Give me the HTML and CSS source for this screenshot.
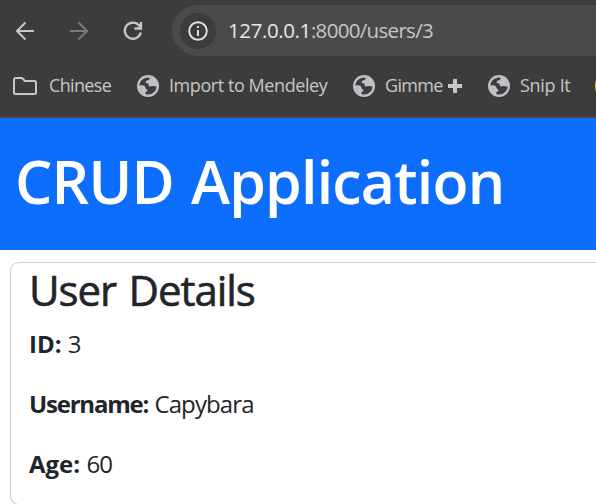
FILE: index.html
```html
<!DOCTYPE html>
<html lang="en">
<head>
<meta charset="utf-8">
<title>CRUD Application</title>
<link rel="stylesheet" href="styles.css">
</head>
<body>
<svg class="sprite" aria-hidden="true">
  <symbol id="globe" viewBox="0 0 64 64">
    <circle cx="32" cy="32" r="32" fill="#bdc1c6"/>
    <path d="M7 30C8 17 19 6 35 7c3 2 1 7-3 8-5 0-7 3-7 7 0 3 5 1 7 3 3 2 1 6 4 8 3 1 6-2 10-1 4 0 7 3 11 1 0 14-12 25-27 24-4-1-6-2-6-5 0-4 5-3 7-6 1-3-3-3-5-6-2-4-1-7-6-9-4-2-8 0-13-2z" fill="#3c3c3c"/>
  </symbol>
</svg>
<header class="browser">
  <div class="toolbar">
    <svg class="nav" viewBox="0 0 20 20"><path d="M19 10H2M10.500 1.500 2 10l8.500 8.500"/></svg>
    <svg class="nav forward" viewBox="0 0 20 20"><path d="M1 10h17M9.500 1.500 18 10l-8.500 8.500"/></svg>
    <svg class="nav reload" viewBox="0 0 20 20"><path d="M17.800 11.500a8.100 8.100 0 1 1-1.700-7.100l1.500 2.100M18 1v6.500h-6.500"/></svg>
    <div class="omnibox">
      <span class="site-info"><svg viewBox="0 0 20 20"><circle cx="10" cy="10" r="8.800"/><path d="M10 9v6M10 5v2"/></svg></span>
      <span class="url"><b>127.0.0.1</b>:8000/users/3</span>
    </div>
  </div>
  <nav class="bookmarks">
    <span class="bookmark folder"><svg viewBox="0 0 24 18"><path d="M1 2.500Q1 1 2.500 1H9l3 3h9.500Q23 4 23 5.500v10q0 1.500-1.500 1.500h-19Q1 17 1 15.500z"/></svg><span>Chinese</span></span>
    <span class="bookmark mendeley"><svg><use href="#globe"/></svg><span>Import to Mendeley</span></span>
    <span class="bookmark gimme"><svg><use href="#globe"/></svg><span>Gimme</span><i class="plus"></i></span>
    <span class="bookmark snip"><svg><use href="#globe"/></svg><span>Snip It</span></span>
    <i class="next"></i>
  </nav>
</header>
<div class="banner"><h1>CRUD Application</h1></div>
<main class="card">
  <h2>User Details</h2>
  <p><strong>ID:</strong> <span>3</span></p>
  <p><strong class="tight">Username:</strong> <span class="value">Capybara</span></p>
  <p><strong>Age:</strong> <span class="value">60</span></p>
</main>
</body>
</html>
```
FILE: styles.css
```css
* { box-sizing: border-box; }
body { margin: 0; height: 504px; overflow: hidden; background: #fff; color: #212529; font-family: "Open Sans", "Noto Sans", sans-serif; }
.sprite { display: none; }
.browser { height: 118px; background: #3c3c3c; border-bottom: 2px solid #474747; overflow: hidden; }
.toolbar { display: flex; align-items: center; height: 51px; margin-top: 5px; padding-left: 15px; }
.nav { width: 20px; height: 20px; flex: none; margin-right: 34px; fill: none; stroke: #c7c7c7; stroke-width: 2; }
.forward { stroke: #7b7b7b; }
.reload { margin-right: 29px; stroke-width: 2.300; }
.omnibox { display: flex; align-items: center; flex: 1; height: 51px; padding-left: 8px; background: #4a4a4a; border-radius: 26px 0 0 26px; }
.site-info { display: flex; align-items: center; justify-content: center; width: 36px; height: 36px; border-radius: 50%; background: #3c3c3c; flex: none; }
.site-info svg { width: 20px; height: 20px; fill: none; stroke: #e3e3e3; stroke-width: 1.900; }
.url { margin: 0 0 2px 12px; font-size: 20.500px; line-height: 30px; letter-spacing: -.68px; color: #c7c7c7; white-space: nowrap; }
.url b { font-weight: 400; letter-spacing: -.4px; color: #e8e8e8; }
.bookmarks { display: flex; align-items: center; height: 60px; padding-left: 13px; font-size: 18px; color: #c7c7c7; white-space: nowrap; }
.bookmark { display: flex; align-items: center; flex: none; letter-spacing: -.43px; }
.bookmark span { margin-top: -2px; }
.bookmark svg { width: 22px; height: 22px; flex: none; margin-right: 10px; }
.folder { width: 124px; letter-spacing: -.65px; }
.folder svg { width: 24px; height: 18px; margin-right: 12px; fill: none; stroke: #c7c7c7; stroke-width: 2; }
.mendeley { width: 216px; }
.gimme { width: 135px; letter-spacing: -.7px; }
.snip { width: 107px; letter-spacing: -.3px; }
.gimme .plus { width: 14px; height: 14px; margin-left: 5px; background: linear-gradient(#c7c7c7, #c7c7c7) center / 14px 4px no-repeat, linear-gradient(#c7c7c7, #c7c7c7) center / 4px 14px no-repeat; }
.next { width: 10px; height: 22px; flex: none; border-radius: 11px 0 0 11px; background: #e8b923; }
.banner { height: 132px; padding: 23px 15px; background: #0d6efd; color: #fff; }
h1 { margin: 0; font-size: 59px; font-weight: 600; line-height: 80px; letter-spacing: -.8px; word-spacing: 2.500px; white-space: nowrap; }
.card { height: 243px; margin: 12px 0 0 10px; padding: 0 18px; border: 1px solid #ccc; border-right: 0; border-radius: 9px 0 0 9px; }
h2 { margin: 0; height: 63px; font-size: 42px; font-weight: 400; line-height: 53px; letter-spacing: -1.050px; word-spacing: 2.500px; -webkit-text-stroke: .6px #212529; white-space: nowrap; }
p { margin: 0 0 24px; font-size: 24px; line-height: 36px; white-space: nowrap; }
strong { font-weight: 700; }
.tight { letter-spacing: -1.200px; }
.value { letter-spacing: -.9px; }
```
